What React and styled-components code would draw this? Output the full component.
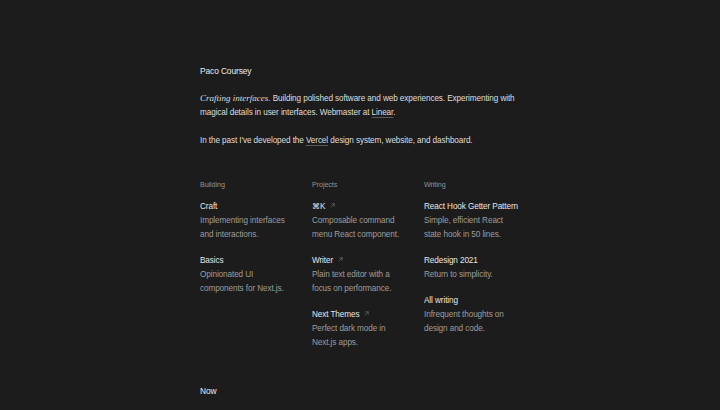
import React from "react";
import styled, { createGlobalStyle } from "styled-components";

const GlobalStyle = createGlobalStyle`
    html, body {
        margin: 0;
        padding: 0;
        background-color: #1c1c1c;
    }
    body {
        font-family: "Liberation Sans", Arial, sans-serif;
    }
`;

const Page = styled.main`
    width: 320px;
    margin: 0 auto;
    padding-top: 64px;
    font-size: 8.2px;
    letter-spacing: -0.1px;
    line-height: 14px;
    font-weight: 400;
    color: #dedede;
    min-height: 100vh;
`;
const Name = styled.h1`
    margin: 0 0 1px 0;
    font-size: 8.4px;
    line-height: 14px;
    font-weight: 400;
    color: #ececec;
`;
const Intro = styled.p`
    margin: 14px 0 0 0;
    line-height: 14px;
`;
const Serif = styled.em`
    font-family: "Liberation Serif", "DejaVu Serif", serif;
    font-size: 9px;
    letter-spacing: 0;
    line-height: 1;
    font-style: italic;
`;
const InlineLink = styled.a`
    color: inherit;
    text-decoration: underline;
    text-decoration-color: #5a5a5a;
    text-underline-offset: 2px;
`;
const Grid = styled.section`
    display: grid;
    grid-template-columns: repeat(3, 1fr);
    column-gap: 16px;
    margin-top: 30px;
`;
const Column = styled.div`
    display: flex;
    flex-direction: column;
    gap: 12px;
`;
const Heading = styled.h2`
    margin: 0 0 -4px 0;
    font-size: 7.2px;
    line-height: 14px;
    font-weight: 400;
    color: #939393;
`;
const Item = styled.div`
    display: flex;
    flex-direction: column;
`;
const Title = styled.span`
    color: #e6e6e6;
    display: inline-flex;
    align-items: center;
    gap: 4px;
    white-space: nowrap;
`;
const Desc = styled.span`
    color: #9c9c9c;
`;
const Arrow = styled.svg`
    width: 7px;
    height: 7px;
    color: #6e6e6e;
    margin-top: -3px;
`;
const Now = styled.h2`
    margin: 34px 0 0 0;
    font-size: 8.4px;
    line-height: 14px;
    font-weight: 400;
    color: #ececec;
`;

const External = () => (
    <Arrow viewBox="0 0 10 10" fill="none" stroke="currentColor" strokeWidth="1">
        <path d="M2.5 7.5 L7.5 2.5 M3.5 2.5 H7.5 V6.5" />
    </Arrow>
);

const columns = [
    {
        heading: "Building",
        items: [
            { title: "Craft", desc: "Implementing interfaces and interactions." },
            { title: "Basics", desc: "Opinionated UI components for Next.js." },
        ],
    },
    {
        heading: "Projects",
        items: [
            { title: "⌘K", desc: "Composable command menu React component.", ext: true },
            { title: "Writer", desc: "Plain text editor with a focus on performance.", ext: true },
            { title: "Next Themes", desc: "Perfect dark mode in Next.js apps.", ext: true },
        ],
    },
    {
        heading: "Writing",
        items: [
            { title: "React Hook Getter Pattern", desc: "Simple, efficient React state hook in 50 lines." },
            { title: "Redesign 2021", desc: "Return to simplicity." },
            { title: "All writing", desc: "Infrequent thoughts on design and code." },
        ],
    },
];

const App = () => {
    return (
        <>
            <GlobalStyle />
            <Page>
                <Name>Paco Coursey</Name>
                <Intro>
                    <Serif>Crafting interfaces.</Serif> Building polished software and web
                    experiences. Experimenting with magical details in user interfaces.
                    Webmaster at <InlineLink>Linear</InlineLink>.
                </Intro>
                <Intro>
                    In the past I've developed the <InlineLink>Vercel</InlineLink> design
                    system, website, and dashboard.
                </Intro>
                <Grid>
                    {columns.map((col) => (
                        <Column key={col.heading}>
                            <Heading>{col.heading}</Heading>
                            {col.items.map((item) => (
                                <Item key={item.title}>
                                    <Title>
                                        {item.title}
                                        {item.ext && <External />}
                                    </Title>
                                    <Desc>{item.desc}</Desc>
                                </Item>
                            ))}
                        </Column>
                    ))}
                </Grid>
                <Now>Now</Now>
            </Page>
        </>
    );
};

export default App;
